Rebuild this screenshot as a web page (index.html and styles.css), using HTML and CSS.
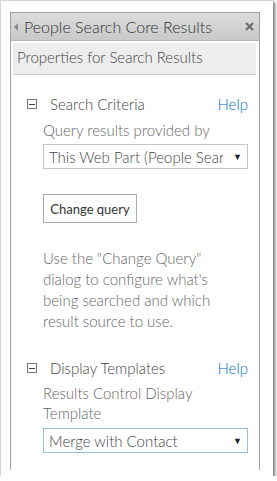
FILE: index.html
```html
<!DOCTYPE html>
<html lang="en">
<head>
   <meta charset="UTF-8">
   <title>People Search Core Results</title>
   <link rel="stylesheet" href="styles.css">
</head>
<body>
   <div class="frame">
      <div class="panel">
         <div class="panel-header">
            <span class="back"></span>
            <span class="title">People Search Core Results</span>
            <svg class="close" width="9" height="9" viewBox="0 0 9 9">
               <path d="M1 1 L8 8 M8 1 L1 8" stroke="#6a6a6a" stroke-width="2"/>
            </svg>
         </div>
         <div class="props">Properties for Search Results</div>

         <div class="section first">
            <div class="section-head">
               <span class="toggle"></span>
               <span class="section-title">Search Criteria</span>
               <a class="help" href="#">Help</a>
            </div>
            <div class="section-body">
               <div class="label">Query results provided by</div>
               <div class="select">
                  <span class="value">This Web Part (People Search Core Results)</span>
                  <span class="arrow">&#x25BC;</span>
               </div>
               <button class="change">Change query</button>
               <p class="note">Use the "Change Query" dialog to configure what's being searched and which result source to use.</p>
            </div>
         </div>

         <div class="section">
            <div class="section-head">
               <span class="toggle"></span>
               <span class="section-title">Display Templates</span>
               <a class="help" href="#">Help</a>
            </div>
            <div class="section-body">
               <div class="label">Results Control Display Template</div>
               <div class="select focused">
                  <span class="value">Merge with Contact</span>
                  <span class="arrow">&#x25BC;</span>
               </div>
            </div>
         </div>
      </div>
   </div>
</body>
</html>
```
FILE: styles.css
```css
* {
   margin: 0;
   padding: 0;
   box-sizing: border-box;
}
body {
   background-color: #fff;
   font-family: Lato, 'Open Sans', sans-serif;
   font-size: 15px;
}
div.frame {
   width: 273px;
   height: 476px;
   background-color: #fff;
   border: 1px solid #d4d4d4;
   border-right: none;
   border-bottom: none;
   box-shadow: 2px 2px 3px rgba(0, 0, 0, 0.55);
   padding: 11px 0 0 9px;
}
div.panel {
   width: 250px;
   height: 458px;
   border: 1px solid #a0a0a0;
   border-bottom: none;
}
div.panel-header {
   height: 28px;
   display: flex;
   align-items: center;
   background: linear-gradient(#dcdcdc, #c9c9c9);
   border-bottom: 1px solid #b4b4b4;
   padding: 0 5px 0 3px;
}
span.back {
   width: 0;
   height: 0;
   border-top: 4px solid transparent;
   border-bottom: 4px solid transparent;
   border-right: 4px solid #8a8a8a;
   margin-right: 6px;
}
span.title {
   flex: 1;
   color: #333;
   font-size: 16px;
   font-weight: 300;
}
div.props {
   margin: 2px 3px 0 2px;
   height: 32px;
   background-color: #ededed;
   border-bottom: 1px solid #c8c8c8;
   padding: 5px 0 0 4px;
   color: #444;
   font-size: 15px;
   font-weight: 300;
}
div.section {
   padding: 26px 11px 0 16px;
}
div.section.first {
   padding-top: 19px;
}
div.section-head {
   display: flex;
   align-items: center;
   height: 20px;
   font-weight: 300;
}
span.toggle {
   width: 10px;
   height: 10px;
   border: 1px solid #777;
   margin-right: 13px;
   display: flex;
   align-items: center;
   justify-content: center;
}
span.toggle::after {
   content: "";
   width: 6px;
   height: 1px;
   background-color: #444;
}
span.section-title {
   flex: 1;
   color: #444;
}
a.help {
   color: #0072c6;
   text-decoration: none;
}
div.section-body {
   padding-left: 16px;
   font-weight: 300;
}
div.label {
   color: #666;
   margin-top: 5px;
   line-height: 20px;
}
div.section.first div.label {
   margin-top: 6px;
}
div.select {
   margin-top: 5px;
   height: 25px;
   border: 1px solid #c6c6c6;
   display: flex;
   align-items: center;
   padding: 0 5px;
   color: #444;
}
div.section.first div.select {
   margin-top: 4px;
}
div.select.focused {
   border-color: #92c0e0;
}
span.value {
   flex: 1;
   min-width: 0;
   white-space: nowrap;
   overflow: hidden;
}
span.arrow {
   font-size: 9px;
   color: #222;
   margin-left: 10px;
}
button.change {
   display: block;
   margin-top: 25px;
   height: 29px;
   width: 94px;
   background-color: #fdfdfd;
   border: 1px solid #ababab;
   font-family: inherit;
   font-size: 13px;
   color: #333;
}
p.note {
   margin-top: 25px;
   max-width: 180px;
   color: #666;
   line-height: 21px;
}
```
